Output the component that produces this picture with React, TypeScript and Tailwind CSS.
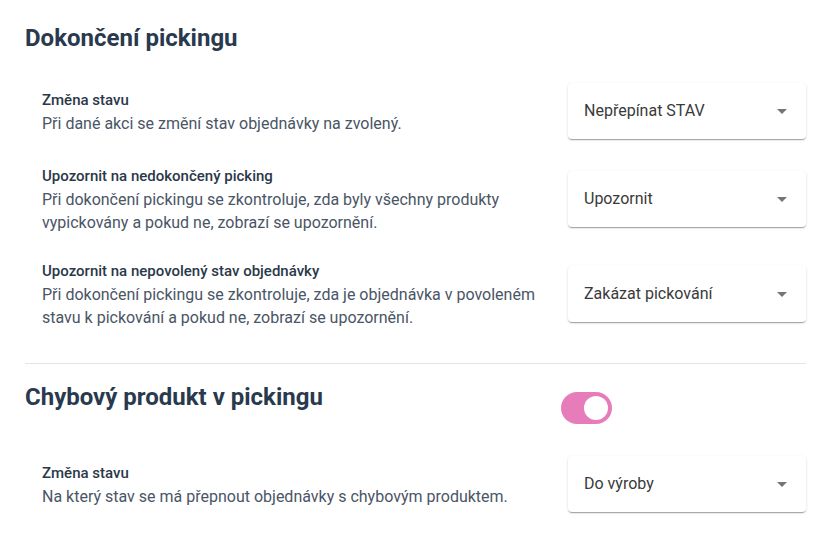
import React from "react";

type Row = {
  label: string;
  desc: string;
  value: string;
};

const pickingRows: Row[] = [
  {
    label: "Změna stavu",
    desc: "Při dané akci se změní stav objednávky na zvolený.",
    value: "Nepřepínat STAV",
  },
  {
    label: "Upozornit na nedokončený picking",
    desc: "Při dokončení pickingu se zkontroluje, zda byly všechny produkty vypickovány a pokud ne, zobrazí se upozornění.",
    value: "Upozornit",
  },
  {
    label: "Upozornit na nepovolený stav objednávky",
    desc: "Při dokončení pickingu se zkontroluje, zda je objednávka v povoleném stavu k pickování a pokud ne, zobrazí se upozornění.",
    value: "Zakázat pickování",
  },
];

function Select({ value }: { value: string }) {
  return (
    <div className="flex h-[56px] w-[238px] shrink-0 items-center justify-between rounded-[4px] bg-white pl-4 pr-[19px] text-[16px] text-[#3a3a3a] shadow-[0_2px_1px_-1px_rgba(0,0,0,0.2),0_1px_1px_0_rgba(0,0,0,0.14),0_1px_3px_0_rgba(0,0,0,0.12)]">
      <span>{value}</span>
      <svg width="10" height="5" viewBox="0 0 10 5" className="mt-[1px]">
        <path d="M0 0L5 5L10 0Z" fill="#757575" />
      </svg>
    </div>
  );
}

function SettingRow({ row }: { row: Row }) {
  return (
    <div className="flex items-center justify-between pl-[17px]">
      <div className="w-[505px] text-[16px] leading-[23px]">
        <div className="text-[15px] font-medium leading-[24px] text-[#2b3849]">{row.label}</div>
        <div className="text-[#4a5566]">{row.desc}</div>
      </div>
      <Select value={row.value} />
    </div>
  );
}

export default function App() {
  return (
    <div
      className="min-h-screen bg-white px-[25px] pt-[24px]"
      style={{ fontFamily: "Roboto, 'Noto Sans', sans-serif" }}
    >
      <h2 className="text-[24px] font-bold leading-[28px] text-[#2a3a4e]">
        Dokončení pickingu
      </h2>

      <div className="mt-[31px] flex flex-col gap-[25px]">
        {pickingRows.map((row) => (
          <SettingRow key={row.label} row={row} />
        ))}
      </div>

      <div className="mt-[34px] h-px bg-[#e4e4e4]" />

      <div className="mt-[19px] flex items-start">
        <h2 className="w-[536px] text-[24px] font-bold leading-[28px] text-[#2a3a4e]">
          Chybový produkt v pickingu
        </h2>
        <div className="mt-[9px] flex h-[32px] w-[51px] items-center justify-end rounded-full bg-[#e67cba] pr-[4px]">
          <div className="h-[24px] w-[24px] rounded-full bg-white" />
        </div>
      </div>

      <div className="mt-[32px]">
        <SettingRow
          row={{
            label: "Změna stavu",
            desc: "Na který stav se má přepnout objednávky s chybovým produktem.",
            value: "Do výroby",
          }}
        />
      </div>
    </div>
  );
}
